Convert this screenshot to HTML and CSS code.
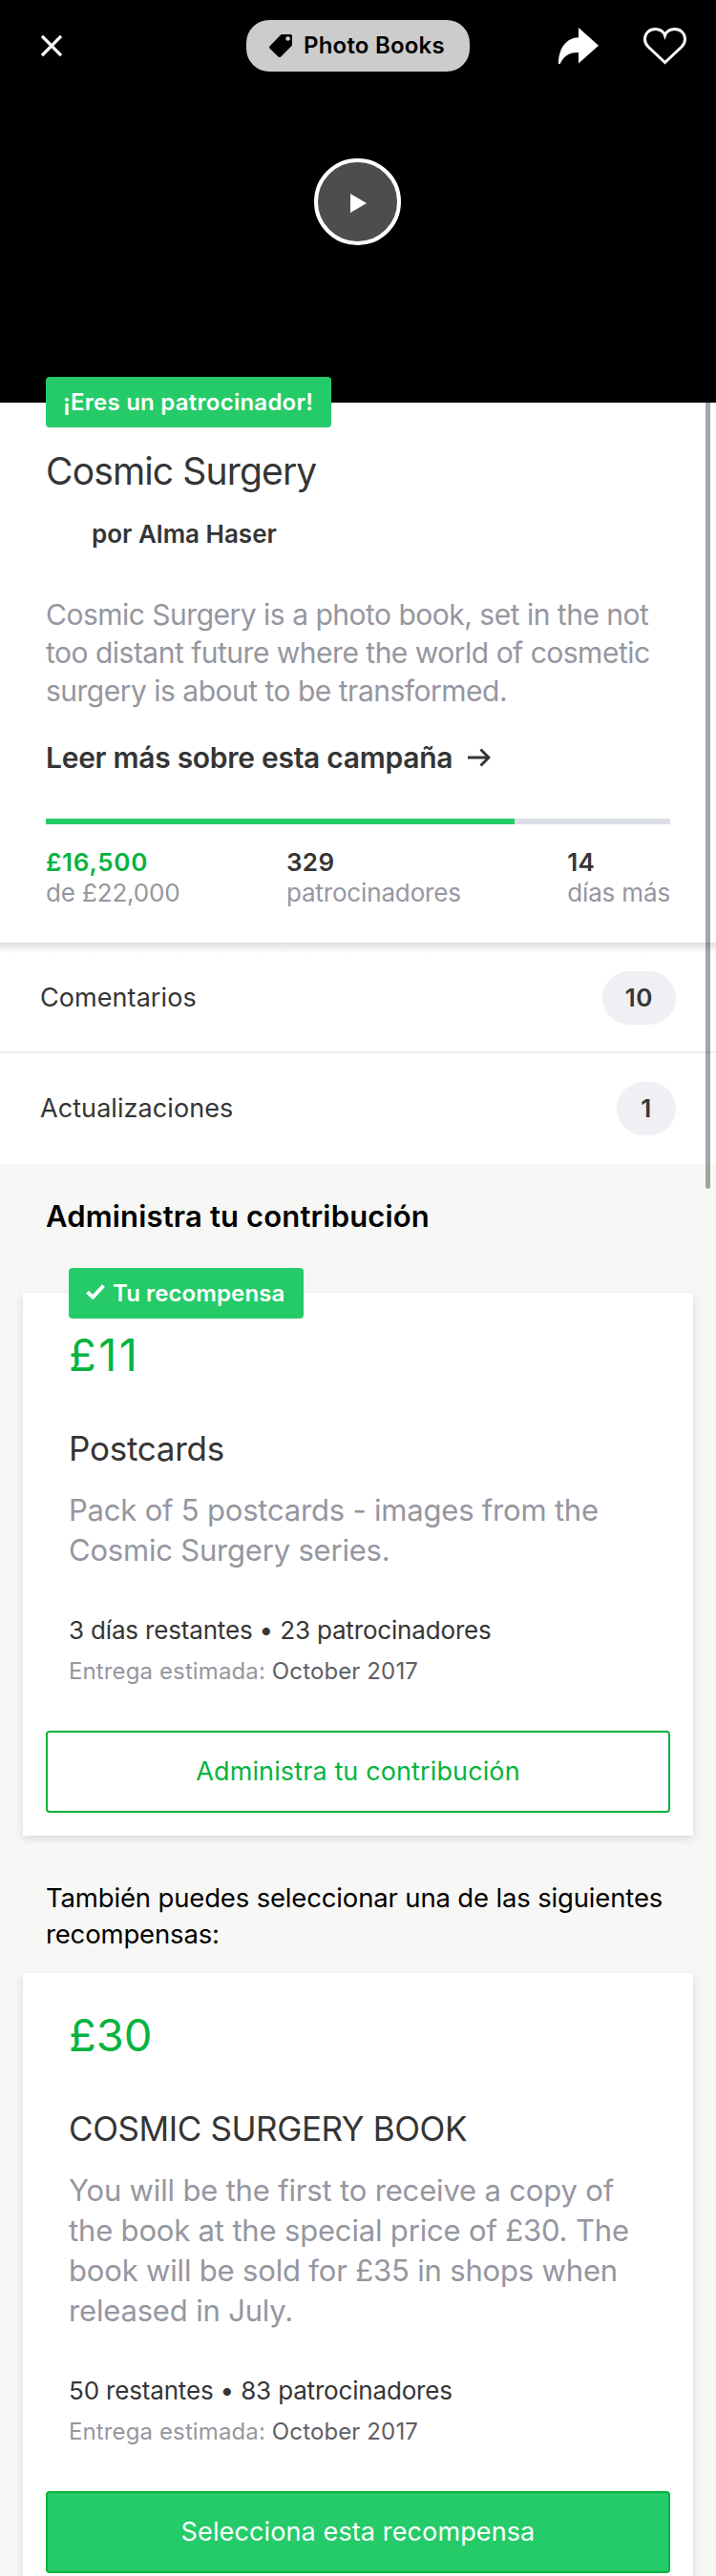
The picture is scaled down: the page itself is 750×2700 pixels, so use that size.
FILE: index.html
```html
<!DOCTYPE html>
<html lang="es">
<head>
<meta charset="utf-8">
<title>Cosmic Surgery</title>
<link rel="stylesheet" href="styles.css">
</head>
<body>
<div class="screen">
  <header class="hero">
    <div class="topbar">
      <svg width="24" height="24" viewBox="0 0 24 24"><path d="M2 1.8 22 22.2M22 1.8 2 22.2" fill="none" stroke="#fff" stroke-width="3.2"/></svg>
      <div class="category">
        <svg width="24" height="24" viewBox="0 0 24 24"><path fill-rule="evenodd" d="M13.6 0H22.4Q24 0 24 1.6V10.4Q24 11.6 23.1 12.5L12.1 23.4Q10.8 24.6 9.5 23.4L.7 14.9Q-.6 13.6 .7 12.3L11.6.9Q12.5 0 13.6 0ZM19.6 2.2a2.3 2.3 0 1 0 .01 0Z" fill="#000"/></svg>
        <span class="category-name">Photo Books</span>
      </div>
      <div class="actions">
        <svg width="42" height="38" viewBox="0 0 42 38"><path d="M21 0 42 18.7 21 37.4V26C12 26 6.500 28.500 1.600 38H0C0 22 8 10.500 21 10.300Z" fill="#fff"/></svg>
        <svg width="45" height="39" viewBox="0 0 45 39"><path d="M22.500 36.500 5.200 20.200C.3 15.400.3 8.600 4.600 4.500 9.500 0 20 .4 22.500 8.200 25 .4 35.500 0 40.400 4.500 44.700 8.600 44.700 15.400 39.800 20.200Z" fill="none" stroke="#fff" stroke-width="2.900"/></svg>
      </div>
    </div>
    <div class="play">
      <svg width="17" height="20" viewBox="0 0 17 20"><path d="M0 0 17 10 0 20Z" fill="#fff"/></svg>
    </div>
  </header>

  <section class="intro">
    <div class="badge badge-backer">¡Eres un patrocinador!</div>
    <h1 class="title">Cosmic Surgery</h1>
    <p class="author">por Alma Haser</p>
    <p class="blurb">Cosmic Surgery is a photo book, set in the not<br>too distant future where the world of cosmetic<br>surgery is about to be transformed.</p>
    <a class="more">Leer más sobre esta campaña
      <svg width="24" height="20" viewBox="0 0 24 20"><path d="M0 10H21.500M13.500 1.500 22 10 13.500 18.500" fill="none" stroke="#353535" stroke-width="2.900"/></svg>
    </a>
    <div class="progress"><div class="progress-fill" style="width:75%"></div></div>
    <div class="stats">
      <div><div class="stat-value pledged">£16,500</div><div class="stat-label">de £22,000</div></div>
      <div><div class="stat-value">329</div><div class="stat-label">patrocinadores</div></div>
      <div><div class="stat-value">14</div><div class="stat-label">días más</div></div>
    </div>
  </section>

  <nav class="links">
    <div class="link-row"><span>Comentarios</span><span class="count">10</span></div>
    <div class="link-row"><span>Actualizaciones</span><span class="count">1</span></div>
  </nav>

  <main class="rewards">
    <h2 class="heading">Administra tu contribución</h2>
    <article class="card">
      <div class="badge badge-reward">
        <svg width="20" height="16" viewBox="0 0 20 16"><path d="M1.500 8.200 7.300 13.600 18.500 1.500" fill="none" stroke="#fff" stroke-width="4"/></svg>
        <span>Tu recompensa</span>
      </div>
      <div class="card-text">
        <div class="price price-ones">£11</div>
        <h3 class="card-title">Postcards</h3>
        <p class="desc">Pack of 5 postcards - images from the<br>Cosmic Surgery series.</p>
        <p class="limits">3 días restantes • 23 patrocinadores</p>
        <p class="delivery">Entrega estimada: <span class="date">October 2017</span></p>
      </div>
      <div class="button button-outline">Administra tu contribución</div>
    </article>

    <p class="also">También puedes seleccionar una de las siguientes<br>recompensas:</p>
    <article class="card">
      <div class="card-text">
        <div class="price">£30</div>
        <h3 class="card-title card-title-caps">COSMIC SURGERY BOOK</h3>
        <p class="desc desc-long">You will be the first to receive a copy of<br>the book at the special price of £30. The<br>book will be sold for £35 in shops when<br>released in July.</p>
        <p class="limits">50 restantes • 83 patrocinadores</p>
        <p class="delivery">Entrega estimada: <span class="date">October 2017</span></p>
      </div>
      <div class="button button-solid">Selecciona esta recompensa</div>
    </article>
  </main>
  <div class="scrollbar"></div>
</div>
</body>
</html>
```
FILE: styles.css
```css
* { box-sizing: border-box; }
body, h1, h2, h3, p { margin: 0; }
body { font-family: Inter, "Liberation Sans", sans-serif; color: #353535; background: #f7f7f5; }
h1, h2, h3 { font-weight: 400; }
svg { display: block; flex: none; }

.screen { position: relative; width: 750px; height: 2700px; overflow: hidden; background: #f7f7f5; white-space: nowrap; }

.hero { height: 422px; background: #000; display: flex; flex-direction: column; }
.topbar { height: 96px; display: grid; grid-template-columns: 216px 234px 1fr; align-items: center; padding: 0 31px 0 42px; }
.category { display: flex; align-items: center; height: 54px; padding-left: 24px; border-radius: 24px; background: #ccc; color: #000; }
.category-name { margin-left: 12px; font-size: 24px; line-height: 30px; font-weight: 600; letter-spacing: .2px; }
.actions { display: flex; justify-content: flex-end; align-items: center; gap: 47px; }
.play { width: 91px; height: 91px; margin: 70px 0 0 329px; border: 4px solid #fff; border-radius: 50%; background: #4d4d4d; display: flex; align-items: center; padding: 3px 0 0 34px; }

.badge { position: absolute; height: 53px; border-radius: 4px; background: #25cb68; color: #fff; font-size: 24px; line-height: 53px; font-weight: 600; }
.badge-backer { left: 48px; top: -27px; width: 299px; padding-left: 18px; letter-spacing: .25px; }
.badge-reward { left: 48px; top: -26px; width: 246px; padding-left: 18px; letter-spacing: .1px; display: flex; gap: 8px; }
.badge-reward svg { margin-top: 17px; }

.intro { position: relative; height: 566px; padding: 48px 48px 0; background: #fff; }
.title { font-size: 39px; line-height: 48px; letter-spacing: -.85px; }
.author { margin: 26px 0 0 48px; font-size: 26px; line-height: 32px; font-weight: 600; }
.blurb { margin-top: 48px; font-size: 30px; line-height: 40px; letter-spacing: -.5px; color: #9696a0; }
.more { display: flex; align-items: center; gap: 16px; margin-top: 30px; font-size: 30px; line-height: 40px; font-weight: 600; letter-spacing: -.28px; }
.progress { height: 6px; margin-top: 44px; background: #dcdee7; }
.progress-fill { height: 100%; background: #25cb68; }
.stats { display: flex; justify-content: space-between; margin-top: 24px; font-size: 26px; line-height: 32px; }
.stat-value { font-weight: 600; letter-spacing: .4px; }
.pledged { color: #06b33f; letter-spacing: .75px; }
.stat-label { color: #9696a0; letter-spacing: -.15px; }

.links { background: linear-gradient(#e0e0e0, #fff 11px); }
.link-row { display: flex; justify-content: space-between; align-items: center; height: 116px; padding: 0 42px; font-size: 27px; line-height: 34px; letter-spacing: .07px; }
.link-row:first-child { box-shadow: inset 0 -2px #ededed; }
.count { height: 56px; padding: 0 24px; border-radius: 28px; background: #efeff4; font-size: 26px; line-height: 56px; font-weight: 600; min-width: 62px; text-align: center; letter-spacing: .6px; }

.heading { padding: 35px 48px 0; font-size: 31px; line-height: 40px; font-weight: 600; letter-spacing: .16px; color: #000; }
.card { position: relative; margin: 60px 24px 0; padding: 37px 24px 24px; background: #fff; box-shadow: 0 3px 9px rgba(0, 0, 0, .13); }
.card-text { padding: 0 24px; }
.price { font-size: 47px; line-height: 56px; color: #06b33f; }
.price-ones { letter-spacing: 2.5px; }
.card-title { margin-top: 48px; font-size: 35px; line-height: 44px; letter-spacing: -.25px; }
.card-title-caps { letter-spacing: -.4px; }
.desc { margin-top: 22px; font-size: 31px; line-height: 42px; letter-spacing: -.2px; color: #9696a0; }
.desc-long { letter-spacing: -.17px; }
.limits { margin-top: 47px; font-size: 26px; line-height: 32px; letter-spacing: -.17px; }
.delivery { margin-top: 12px; font-size: 24px; line-height: 30px; letter-spacing: .12px; color: #9696a0; }
.date { color: #5e5e66; }
.button { height: 86px; margin-top: 47px; border: 2px solid #06b33f; border-radius: 4px; text-align: center; font-size: 27px; line-height: 82px; letter-spacing: .12px; }
.button-outline { color: #06b33f; }
.button-solid { background: #25cb68; color: #fff; }
.also { padding: 46px 48px 0; font-size: 27.5px; line-height: 38px; letter-spacing: -.16px; color: #000; }
.also + .card { margin-top: 22px; }

.scrollbar { position: absolute; top: 422px; left: 739px; width: 5px; height: 824px; border-radius: 0 0 3px 3px; background: rgba(0, 0, 0, .35); }
```
